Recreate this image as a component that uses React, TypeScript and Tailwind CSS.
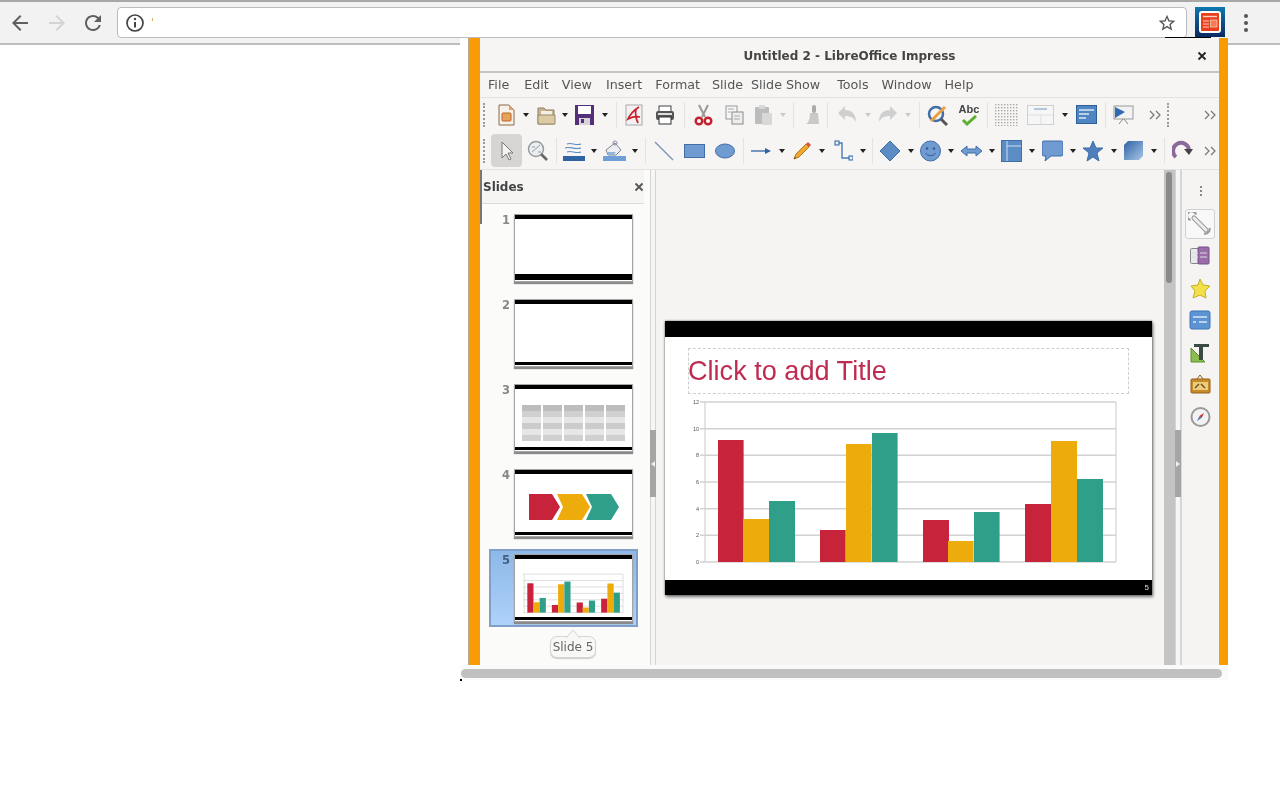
import React from "react";

const RED = "#c7233b", YEL = "#eeab0c", GRN = "#2f9f8a";
const BLUED = "#2f62a3";

function S({ w, h = 22, vb, className = "", children }: { w: number; h?: number; vb?: string; className?: string; children?: React.ReactNode }) {
  return (
    <svg width={w} height={h} viewBox={vb ?? `0 0 ${w} ${h}`} className={`shrink-0 block ${className}`} fill="none">
      {children}
    </svg>
  );
}
const Arrow = ({ className = "", light = false }: { className?: string; light?: boolean }) => (
  <S w={6} h={4} className={className}><path d="M0 0h6L3 4z" fill={light ? "#c9c9c9" : "#222"} /></S>
);
const Sep = ({ className = "" }: { className?: string }) => <div className={`w-px h-[26px] bg-[#e4e3e1] shrink-0 ${className}`} />;
const Grip = ({ className = "" }: { className?: string }) => (
  <div className={`w-[3px] h-[24px] shrink-0 ${className}`}>
    <div className="h-full w-[2px] border-l-2 border-dotted border-[#9a9a9a]" />
  </div>
);
const More = ({ className = "" }: { className?: string }) => (
  <S w={12} h={12} className={className}><path d="M1 2l4 4-4 4M7 2l4 4-4 4" stroke="#777" strokeWidth="1.2" /></S>
);

function Row1() {
  return (
    <div className="flex items-center h-[30px]">
      <Grip className="ml-[3px]" />
      <S w={20} className="ml-[10px]"><path d="M3 1h10l5 5v15H3z" fill="#f7f1e8" stroke="#8a6a4a" /><path d="M13 1l5 5h-5z" fill="#e8a070" /><rect x="6" y="9" width="9" height="8" rx="1" fill="#e8a35a" stroke="#b9652b" /></S>
      <Arrow className="ml-[7px]" />
      <S w={20} className="ml-[7px]"><path d="M2 4h6l2 2h8v14H2z" fill="#c9b58f" stroke="#8f7f60" /><path d="M5 7h11v4H5z" fill="#f2efe8" /><path d="M2 11h17v9H2z" fill="#dccaa5" stroke="#9a8a68" /></S>
      <Arrow className="ml-[6px]" />
      <S w={21} className="ml-[6px]"><path d="M1 1h19v20H1z" fill="#54307a" /><rect x="4" y="2" width="13" height="8" fill="#fff" /><rect x="5" y="14" width="11" height="7" fill="#d8d4dc" /><rect x="7" y="15" width="3" height="4" fill="#54307a" /></S>
      <Arrow className="ml-[7px]" />
      <Sep className="ml-[8px]" />
      <S w={18} className="ml-[8px]"><rect x="1" y="1" width="16" height="20" fill="#f3f1f1" stroke="#aaa" /><path d="M14 3C9 6 5 11 3 15c4-2 8-3 12-2M11 5c-1 5 0 10 2 14" stroke="#c8202c" strokeWidth="1.7" /></S>
      <S w={20} className="ml-[12px]"><rect x="4" y="2" width="12" height="6" fill="#fff" stroke="#444" /><rect x="1" y="7" width="18" height="9" rx="2" fill="#555" /><rect x="4" y="13" width="12" height="7" fill="#fff" stroke="#333" /><rect x="3" y="9" width="14" height="2" fill="#ddd" /></S>
      <Sep className="ml-[9px]" />
      <S w={19} className="ml-[9px]"><path d="M5 1l6 12M14 1L8 13" stroke="#999" strokeWidth="2" /><circle cx="5" cy="17" r="3.3" stroke="#c4202c" strokeWidth="2.4" /><circle cx="14" cy="17" r="3.3" stroke="#c4202c" strokeWidth="2.4" /></S>
      <S w={20} className="ml-[11px]"><rect x="2" y="2" width="11" height="13" fill="#f5f5f5" stroke="#999" /><rect x="8" y="8" width="11" height="12" fill="#eee" stroke="#8a8a8a" /><path d="M4 5h6M4 8h3M10 12h6M10 15h6" stroke="#aaa" /></S>
      <S w={20} className="ml-[9px]"><rect x="2" y="3" width="14" height="17" rx="1" fill="#bcbcbc" /><rect x="6" y="1" width="6" height="4" fill="#d8d8d8" /><rect x="9" y="9" width="10" height="12" fill="#d8d8d8" /></S>
      <Arrow light className="ml-[7px]" />
      <Sep className="ml-[7px]" />
      <S w={19} className="ml-[10px]"><rect x="8" y="1" width="4" height="8" rx="2" fill="#aaa" /><path d="M6 9h8l1 11H2c3-2 4-6 4-11z" fill="#c9c9c9" /></S>
      <Sep className="ml-[4px]" />
      <S w={20} className="ml-[9px]"><path d="M1 9l7-7v4c7 0 11 4 11 12-2-4-5-6-11-6v4z" fill="#cfcfcf" /></S>
      <Arrow light className="ml-[8px]" />
      <S w={20} className="ml-[7px]"><path d="M19 9l-7-7v4C5 6 1 10 1 18c2-4 5-6 11-6v4z" fill="#cfcfcf" /></S>
      <Arrow light className="ml-[7px]" />
      <Sep className="ml-[8px]" />
      <S w={21} className="ml-[7px]"><circle cx="9" cy="10" r="7" stroke="#3f6ea8" strokeWidth="2.5" /><path d="M4 17L18 3" stroke="#e8a040" strokeWidth="3" /><path d="M14 15l6 6" stroke="#555" strokeWidth="3" /></S>
      <div className="ml-[10px] w-[22px] h-[22px] shrink-0 relative">
        <span className="block text-[11px] leading-[11px] font-bold text-[#444] text-center font-['Liberation_Sans',sans-serif]">Abc</span>
        <S w={22} h={11}><path d="M5 5l4 4 9-8" stroke="#5cb030" strokeWidth="3" /></S>
      </div>
      <Sep className="ml-[7px]" />
      <S w={24} className="ml-[7px]"><rect width="24" height="22" fill="url(#dots)" /><defs><pattern id="dots" width="3" height="3" patternUnits="userSpaceOnUse"><rect width="1.4" height="1.4" fill="#aaa" /></pattern></defs></S>
      <S w={27} className="ml-[8px]"><rect x="0.5" y="1.5" width="26" height="19" fill="#f6f6f6" stroke="#cfcfcf" /><path d="M7 5h13" stroke="#8fa9cf" strokeWidth="1.3" /><path d="M1 11h25M14 11v9" stroke="#ddd" /></S>
      <Arrow className="ml-[8px]" />
      <S w={21} className="ml-[8px]"><rect x="0.5" y="1.5" width="20" height="18" fill="#4f86c2" stroke="#2d6099" /><path d="M3 6h15M3 10h10M3 14h7" stroke="#dbe8f5" strokeWidth="1.6" /></S>
      <Sep className="ml-[8px]" />
      <S w={21} className="ml-[7px]"><rect x="1" y="2" width="19" height="13" fill="#f2f2f2" stroke="#9a9a9a" /><path d="M2 3l10 5-10 6z" fill="#2f6bb0" /><path d="M10 15l-4 5M11 15l4 5" stroke="#888" /></S>
      <More className="ml-[15px]" />
      <Grip className="ml-[6px]" />
      <More className="ml-[34px]" />
    </div>
  );
}

function Row2() {
  return (
    <div className="flex items-center h-[35px]">
      <Grip className="ml-[3px]" />
      <div className="ml-[5px] w-[31px] h-[33px] bg-[#d6d5d3] rounded-[4px] flex items-center justify-center shrink-0">
        <S w={16} h={20}><path d="M3 1l11 11H9l3 6-2 1-3-6-4 4z" fill="#f4f4f4" stroke="#777" /></S>
      </div>
      <S w={21} className="ml-[5px]"><circle cx="9" cy="9" r="7.5" fill="#e9eef2" stroke="#9a9a9a" strokeWidth="1.5" /><path d="M5 12l8-7M5 7h3M11 12h3" stroke="#9a9a9a" /><path d="M14 14l6 6" stroke="#666" strokeWidth="2.6" /></S>
      <Sep className="ml-[8px]" />
      <S w={22} className="ml-[6px]"><path d="M4 4c4-2 9 2 14 0M2 8c4-2 10 2 16 0M4 12c4-2 9 2 14 0" stroke="#5b8cc4" strokeWidth="1.2" /><rect y="16" width="22" height="5" fill="#2f62a3" /></S>
      <Arrow className="ml-[6px]" />
      <S w={23} className="ml-[6px]"><path d="M3 10l9-7 6 7-5 5H5z" fill="#eceff2" stroke="#7a8694" /><circle cx="12" cy="3" r="2" stroke="#889" /><path d="M5 12h8l-3 3H5z" fill="#8fb3d9" /><rect y="16" width="23" height="5" fill="#6f9fd4" /></S>
      <Arrow className="ml-[6px]" />
      <Sep className="ml-[7px]" />
      <S w={20} className="ml-[8px]"><path d="M1 2l18 18" stroke="#7f95b8" strokeWidth="1.4" /></S>
      <S w={21} className="ml-[10px]"><rect x="0.5" y="4.5" width="20" height="13" fill="#6f9bd1" stroke="#3f6ea8" /></S>
      <S w={20} className="ml-[10px]"><ellipse cx="10" cy="11" rx="9.5" ry="7" fill="#6f9bd1" stroke="#3f6ea8" /></S>
      <Sep className="ml-[8px]" />
      <S w={20} className="ml-[7px]"><path d="M0 11h15" stroke={BLUED} strokeWidth="1.3" /><path d="M14 8l6 3-6 3z" fill={BLUED} /></S>
      <Arrow className="ml-[8px]" />
      <S w={19} className="ml-[7px]"><path d="M4 14L14 4l3 3L7 17l-5 2z" fill="#eeaa30" stroke="#b97a1a" /><path d="M14 4l2-2 3 3-2 2z" fill="#d8504a" /><path d="M2 19l2-1-1-1z" fill="#333" /></S>
      <Arrow className="ml-[8px]" />
      <S w={19} className="ml-[9px]"><path d="M3 3h5v15h9" stroke="#4a7cb8" strokeWidth="1.4" /><rect x="1" y="1" width="4" height="4" fill="#e8eef6" stroke={BLUED} /><rect x="15" y="16" width="4" height="4" fill="#e8eef6" stroke={BLUED} /></S>
      <Arrow className="ml-[7px]" />
      <Sep className="ml-[6px]" />
      <S w={22} className="ml-[6px]"><path d="M11 1l10 10-10 10L1 11z" fill="#5b8cc4" stroke="#3f6ea8" /></S>
      <Arrow className="ml-[7px]" />
      <S w={21} className="ml-[6px]"><circle cx="10.5" cy="11" r="10" fill="#6f9bd1" stroke="#3f6ea8" /><circle cx="7" cy="8.5" r="1.2" fill="#2f5a94" /><circle cx="14" cy="8.5" r="1.2" fill="#2f5a94" /><path d="M5.5 13c2 3.5 8 3.5 10 0" stroke="#2f5a94" /></S>
      <Arrow className="ml-[7px]" />
      <S w={21} className="ml-[7px]"><path d="M0 11l6-5v3h9V6l6 5-6 5v-3H6v3z" fill="#6f9bd1" stroke="#3f6ea8" /></S>
      <Arrow className="ml-[7px]" />
      <S w={21} className="ml-[6px]"><rect x="0.5" y="0.5" width="20" height="21" fill="#5b8cc4" stroke="#3f6ea8" /><path d="M6 1v20M6 6h14" stroke="#cfe0f2" /></S>
      <Arrow className="ml-[7px]" />
      <S w={21} className="ml-[7px]"><path d="M2 1h17a2 2 0 0 1 2 2v11a2 2 0 0 1-2 2H9l-6 5 1-5H2a2 2 0 0 1-2-2V3a2 2 0 0 1 2-2z" fill="#6f9bd1" stroke="#3f6ea8" /></S>
      <Arrow className="ml-[7px]" />
      <S w={20} className="ml-[7px]"><path d="M10 1l3 7h7l-6 5 2 8-6-4-6 4 2-8-6-5h7z" fill="#4f7fbd" stroke="#3f6ea8" /></S>
      <Arrow className="ml-[8px]" />
      <S w={19} className="ml-[7px]"><defs><linearGradient id="cb" x1="0" y1="0" x2="1" y2="1"><stop offset="0" stopColor="#2f62a3" /><stop offset="1" stopColor="#a8c6e8" /></linearGradient></defs><path d="M0 5l4-4h15v15l-4 4H0z" fill="url(#cb)" /></S>
      <Arrow className="ml-[8px]" />
      <Sep className="ml-[7px]" />
      <S w={21} className="ml-[7px]"><path d="M4 17A8 8 0 1 1 17 10" stroke="#8a6a9a" strokeWidth="4" /><path d="M12 9h9l-4 6z" fill="#444" /></S>
      <More className="ml-[11px]" />
    </div>
  );
}

const MENU = [
  ["File", "ml-[8px]"], ["Edit", "ml-[15px]"], ["View", "ml-[13px]"], ["Insert", "ml-[14px]"], ["Format", "ml-[13px]"],
  ["Slide", "ml-[12px]"], ["Slide Show", "ml-[8px]"], ["Tools", "ml-[17px]"], ["Window", "ml-[13px]"], ["Help", "ml-[13px]"],
];

const BARS: [number, number, string][] = [
  [718, 440, RED], [743, 519, YEL], [769, 501, GRN], [820, 530, RED], [846, 444, YEL], [872, 433, GRN],
  [923, 520, RED], [948, 541, YEL], [974, 512, GRN], [1025, 504, RED], [1051, 441, YEL], [1077, 479, GRN],
];

function ChartShapes({ labels }: { labels?: boolean }) {
  const ys = [402, 428.7, 455.3, 482, 508.7, 535.3, 562];
  return (
    <>
      {ys.map((y) => <path key={y} d={`M700 ${y}H1116`} stroke="#d2d2d2" strokeWidth={labels ? 1.6 : 3} />)}
      <path d="M705 402V562M1116 402V562" stroke="#d2d2d2" strokeWidth={labels ? 1.2 : 3} />
      {BARS.map(([x, t, c]) => <rect key={x} x={x} y={t} width={x % 2 ? 26 : 25.6} height={562 - t} fill={c} />)}
      {labels && ["12", "10", "8", "6", "4", "2", "0"].map((l, i) => (
        <text key={l} x={699} y={ys[i] + 2} textAnchor="end" fontSize="5.5" fill="#555" fontFamily="Liberation Sans, sans-serif">{l}</text>
      ))}
    </>
  );
}

function Thumb({ n, thick, selected, children }: { n: number; thick?: boolean; selected?: boolean; children?: React.ReactNode }) {
  return (
    <div className={`w-[149px] h-[78px] ml-[9px] flex shrink-0 ${selected ? "bg-gradient-to-b from-[#8db8e8] to-[#aed2fa] border-2 border-[#7f9fc8] pl-[11px] pt-[3px]" : "pl-[13px] pt-[5px]"}`}>
      <span className={`w-[12px] shrink-0 text-[11.5px] leading-[12px] font-bold ${selected ? "text-[#44607f]" : "text-[#888]"}`}>{n}</span>
      <div className="w-[119px] h-[68px] bg-white border border-[#a5a5a5] shadow-[0_2px_1px_#8a8a8a] flex flex-col shrink-0">
        <div className="h-[4px] bg-black shrink-0" />
        <div className="flex-1 min-h-0 flex items-center justify-center">{children}</div>
        <div className={`${thick ? "h-[6px]" : "h-[3px]"} bg-black shrink-0 mb-[1px]`} />
      </div>
    </div>
  );
}

const TABLE_ROWS = ["bg-[#bdbdbd]", "bg-[#d0d0d0]", "bg-[#e6e6e6]", "bg-[#cccccc]", "bg-[#e6e6e6]", "bg-[#d0d0d0]"];

function SlidesPanel() {
  return (
    <div className="w-[170px] shrink-0 bg-[#fbfbfa] flex flex-col relative">
      <div className="h-[34px] bg-[#f6f5f4] flex items-center justify-between pl-[3px] border-b border-[#dcdcdc] mr-[6px] shrink-0">
        <span className="text-[12px] font-bold text-[#444]">Slides</span>
        <S w={10} h={10}><path d="M1.5 1.5l7 7M8.5 1.5l-7 7" stroke="#555" strokeWidth="1.8" /></S>
      </div>
      <div className="absolute left-0 top-0 w-[2px] h-[54px] bg-[#777]" />
      <div className="flex flex-col gap-[7px] pt-[5px]">
        <Thumb n={1} thick />
        <Thumb n={2} />
        <Thumb n={3}>
          <div className="w-[103px] grid grid-cols-5 gap-x-[2px] mt-[10px]">
            {TABLE_ROWS.flatMap((r, i) => [0, 1, 2, 3, 4].map((c) => <div key={`${i}-${c}`} className={`h-[6px] ${r}`} />))}
          </div>
        </Thumb>
        <Thumb n={4}>
          <S w={90} h={26} className="mt-[8px]">
            <path d="M0 0h23l8 13-8 13H0z" fill={RED} />
            <path d="M28 0h25l8 13-8 13H28l6-13z" fill={YEL} />
            <path d="M57 0h25l8 13-8 13H57l6-13z" fill={GRN} />
          </S>
        </Thumb>
        <Thumb n={5} selected>
          <S w={101} h={41} vb="700 400 420 165" className="mt-[10px]"><ChartShapes /></S>
        </Thumb>
      </div>
      <div className="absolute left-[70px] top-[466px] w-[46px] h-[22px] rounded-[7px] border border-[#d5d5d5] bg-[#f8f8f7] shadow-[0_1px_1px_#ccc] flex items-center justify-center text-[12px] text-[#666] whitespace-nowrap">
        Slide 5
        <svg width="14" height="9" viewBox="0 0 14 9" className="absolute left-[15px] -top-[8px]" fill="none"><path d="M0 9L7 1l7 8" fill="#f8f8f7" stroke="#d5d5d5" /></svg>
      </div>
    </div>
  );
}

function Handle({ dir }: { dir: "l" | "r" }) {
  return (
    <div className="w-[6px] shrink-0 bg-[#f7f6f5] border-x border-[#d4d4d4] flex flex-col pt-[260px]">
      <div className={`h-[67px] shrink-0 bg-[#a5a5a5] flex items-center justify-center ${dir === "l" ? "w-[7px] -ml-[2px]" : "w-[6px] -ml-px"}`}>
        <S w={4} h={6}><path d={dir === "l" ? "M4 0v6L0 3z" : "M0 0v6l4-3z"} fill="#eee" /></S>
      </div>
    </div>
  );
}

function BigSlide() {
  return (
    <div className="w-[487px] h-[274px] ml-[9px] mt-[151px] bg-white flex flex-col shadow-[0_0_2px_#666,1px_2px_3px_#777] shrink-0">
      <div className="h-[16px] bg-black shrink-0" />
      <div className="flex-1 flex flex-col min-h-0">
        <div className="ml-[23px] mt-[11px] w-[441px] h-[46px] border border-dashed border-[#cfcfcf] shrink-0 flex items-center">
          <span className="text-[27.1px] leading-[46px] text-[#bf2c52] font-['Liberation_Sans',sans-serif] -ml-px">Click to add Title</span>
        </div>
        <S w={434} h={170} vb="686 398 434 170" className="ml-[21px] mt-[4px]"><ChartShapes labels /></S>
      </div>
      <div className="h-[15px] bg-black shrink-0 flex items-center justify-end pr-[3px]">
        <span className="text-[8px] leading-[8px] text-[#ddd] font-['Liberation_Sans',sans-serif]">5</span>
      </div>
    </div>
  );
}

function DeckBar() {
  return (
    <div className="w-[38px] shrink-0 bg-[#f5f4f3] border-l border-[#d8d8d8] flex flex-col items-center">
      <div className="h-[39px] flex items-center flex-col justify-center gap-[2px] pt-[2px]">
        <i className="w-[2px] h-[2px] bg-[#888] block" /><i className="w-[2px] h-[2px] bg-[#888] block" /><i className="w-[2px] h-[2px] bg-[#888] block" />
      </div>
      <div className="w-[30px] h-[30px] -ml-px border border-[#d0d0d0] rounded-[3px] bg-[#f8f8f8] flex items-center justify-center">
        <S w={24} h={24}>
          <path d="M6 6l12 12" stroke="#999" strokeWidth="5" strokeLinecap="round" />
          <path d="M6 6l12 12" stroke="#ececec" strokeWidth="3" strokeLinecap="round" />
          <path d="M8 2.5A4.5 4.5 0 1 0 2.5 8M16 21.5A4.5 4.5 0 0 0 21.5 16" stroke="#999" strokeWidth="2" />
        </S>
      </div>
      <div className="flex flex-col items-center gap-[10px] mt-[6px] -ml-px">
        <S w={20}><rect x="0.5" y="3.5" width="9" height="15" rx="1" fill="#e8e8ee" stroke="#888" /><rect x="8" y="2" width="11" height="17" rx="1" fill="#9a6ca8" stroke="#75508a" /><path d="M2 8h6M2 12h6M10 8h7M10 12h7" stroke="#ddd" /></S>
        <S w={21}><path d="M10 2l3 6 7 1-5 5 1 7-6-3-7 3 2-7-4-5 7-1z" fill="#f4e04a" stroke="#c4b020" /></S>
        <S w={22}><rect x="1" y="2" width="20" height="18" rx="2" fill="#5b93d3" stroke="#3f75b5" /><path d="M4 8h14M10 13h8M4 13h3" stroke="#d8e8f8" strokeWidth="1.4" /></S>
        <S w={21}><path d="M1 21V7l14 14z" fill="#8cbb50" stroke="#5f8f30" /><path d="M4 3h15v3h-6v13H9V6H4z" fill="#3a4a44" /></S>
        <S w={21}><rect x="1" y="6" width="19" height="14" rx="1" fill="#c98a2a" stroke="#94601a" /><rect x="3" y="9" width="15" height="8" fill="#e9cd7a" /><path d="M7 6l3-4 3 4" stroke="#94601a" /><path d="M5 15l4-4M11 11l4 4" stroke="#7a5020" strokeWidth="1.5" /></S>
        <S w={21} className="mt-[1px]"><circle cx="10.5" cy="11" r="9" fill="#f2f2f2" stroke="#999" strokeWidth="2" /><path d="M14 7l-2.5 5-2-2z" fill="#c8202c" /><path d="M7 15l2.5-5 2 2z" fill="#4a78b0" /></S>
      </div>
    </div>
  );
}

export default function App() {
  return (
    <div className="w-[1280px] h-[800px] bg-white overflow-hidden font-['DejaVu_Sans',sans-serif]">
      <header className="h-[45px] relative bg-[#f2f2f2] border-t-2 border-[#a8a8a8] border-b-2 border-b-[#bdbdbd] flex items-center">
        <svg width="24" height="24" viewBox="0 0 24 24" className="ml-[8px] shrink-0"><path fill="#5f5f5f" d="M20 11H7.83l5.59-5.59L12 4l-8 8 8 8 1.41-1.41L7.83 13H20v-2z" /></svg>
        <svg width="24" height="24" viewBox="0 0 24 24" className="ml-[13px] shrink-0"><path fill="#d4d4d4" d="M12 4l-1.41 1.41L16.17 11H4v2h12.17l-5.58 5.59L12 20l8-8z" /></svg>
        <svg width="24" height="24" viewBox="0 0 24 24" className="ml-[12px] shrink-0"><path fill="#5f5f5f" d="M17.65 6.35A7.958 7.958 0 0 0 12 4c-4.42 0-7.99 3.58-7.99 8s3.57 8 7.99 8c3.73 0 6.84-2.55 7.73-6h-2.08A5.99 5.99 0 0 1 12 18c-3.31 0-6-2.69-6-6s2.69-6 6-6c1.66 0 3.14.69 4.22 1.78L13 11h7V4l-2.35 2.35z" /></svg>
        <div className="ml-[12px] w-[1070px] h-[31px] bg-white border border-[#bcbcbc] rounded-[4px] flex items-center shrink-0">
          <svg width="20" height="20" viewBox="0 0 20 20" className="ml-[7px] shrink-0" fill="none"><circle cx="10" cy="10" r="8" stroke="#444" strokeWidth="1.7" /><path d="M10 9v5.5" stroke="#444" strokeWidth="2" /><circle cx="10" cy="6" r="1.2" fill="#444" /></svg>
          <div className="ml-[7px] w-px h-[3px] bg-[#e0b060] -mt-[6px]" />
          <svg width="20" height="20" viewBox="0 0 24 24" className="ml-auto mr-[9px] shrink-0"><path fill="#555" d="M22 9.24l-7.19-.62L12 2 9.19 8.63 2 9.24l5.46 4.73L5.82 21 12 17.27 18.18 21l-1.63-7.03L22 9.24zM12 15.4l-3.76 2.27 1-4.28-3.32-2.88 4.38-.38L12 6.1l1.71 4.04 4.38.38-3.32 2.88 1 4.28L12 15.4z" /></svg>
        </div>
        <div className="ml-[8px] w-[30px] h-[30px] bg-gradient-to-b from-[#0f77ae] to-[#0a2a60] flex items-center justify-center shrink-0 -mt-[2px]">
          <div className="w-[22px] h-[22px] rounded-[3px] bg-white p-[2px]">
            <svg width="18" height="18" viewBox="0 0 18 18" className="block"><rect width="18" height="18" rx="1" fill="#e8401c" /><path d="M2 3.5h14" stroke="#fbd0c0" strokeWidth="1.4" /><path d="M2 8h6M2 11h6M2 14h6" stroke="#fbd0c0" /><rect x="9.5" y="7" width="6.5" height="7" fill="#f47a50" stroke="#fbd0c0" strokeWidth="0.7" /></svg>
          </div>
        </div>
        <div className="ml-[19px] flex flex-col gap-[3px] shrink-0">
          <i className="block w-[4px] h-[4px] rounded-full bg-[#555]" /><i className="block w-[4px] h-[4px] rounded-full bg-[#555]" /><i className="block w-[4px] h-[4px] rounded-full bg-[#555]" />
        </div>
        <div className="absolute left-[1165px] top-[35px] w-[46px] h-px bg-black" />
      </header>

      <div className="relative ml-[460px] -mt-[7px] w-[768px] h-[642px] bg-white flex flex-col">
        <div className="flex h-[627px] shrink-0 blur-[0.4px]">
          <div className="w-[8px] shrink-0 bg-white" />
          <div className="w-[2px] shrink-0 bg-[#b9a68f]" />
          <div className="w-[10px] shrink-0 bg-[#f99b05]" />
          <div className="w-[739px] shrink-0 bg-[#f6f5f4] flex flex-col overflow-hidden">
            <div className="h-[35px] pt-[3px] shrink-0 grid grid-cols-[1fr_auto_1fr] items-center border-b-2 border-[#c6c6c6]">
              <span />
              <span className="text-[12px] font-bold text-[#444] whitespace-nowrap">Untitled 2 - LibreOffice Impress</span>
              <S w={10} h={10} className="justify-self-end mr-[12px]"><path d="M1.5 1.5l7 7M8.5 1.5l-7 7" stroke="#222" strokeWidth="1.8" /></S>
            </div>
            <nav className="h-[25px] shrink-0 flex items-center border-b border-[#e4e3e1] text-[12.7px] text-[#555] whitespace-nowrap">
              {MENU.map(([t, c]) => <span key={t} className={c}>{t}</span>)}
            </nav>
            <div className="pt-[2px] shrink-0 h-[34px]"><Row1 /></div>
            <div className="pt-[1px] shrink-0 h-[37px]"><Row2 /></div>
            <div className="flex-1 min-h-0 flex border-t border-[#e4e3e1]">
              <SlidesPanel />
              <Handle dir="l" />
              <main className="w-[508px] shrink-0 bg-[#f5f4f3] flex flex-col"><BigSlide /></main>
              <div className="w-[11px] shrink-0 bg-[#c4c4c4] pt-[2px] pl-[2px]">
                <div className="w-[6px] h-[111px] rounded-[3px] bg-[#8a8a8a]" />
              </div>
              <Handle dir="r" />
              <DeckBar />
            </div>
          </div>
          <div className="w-[9px] shrink-0 bg-[#f99b05]" />
        </div>
        <div className="flex-1 bg-[#fafafa] pt-[4px] pl-[1px]">
          <div className="w-[761px] h-[9px] rounded-[5px] bg-[#c0c0c0]" />
        </div>
        <div className="absolute left-0 bottom-[-1px] w-[2px] h-[2px] bg-black" />
      </div>
    </div>
  );
}
